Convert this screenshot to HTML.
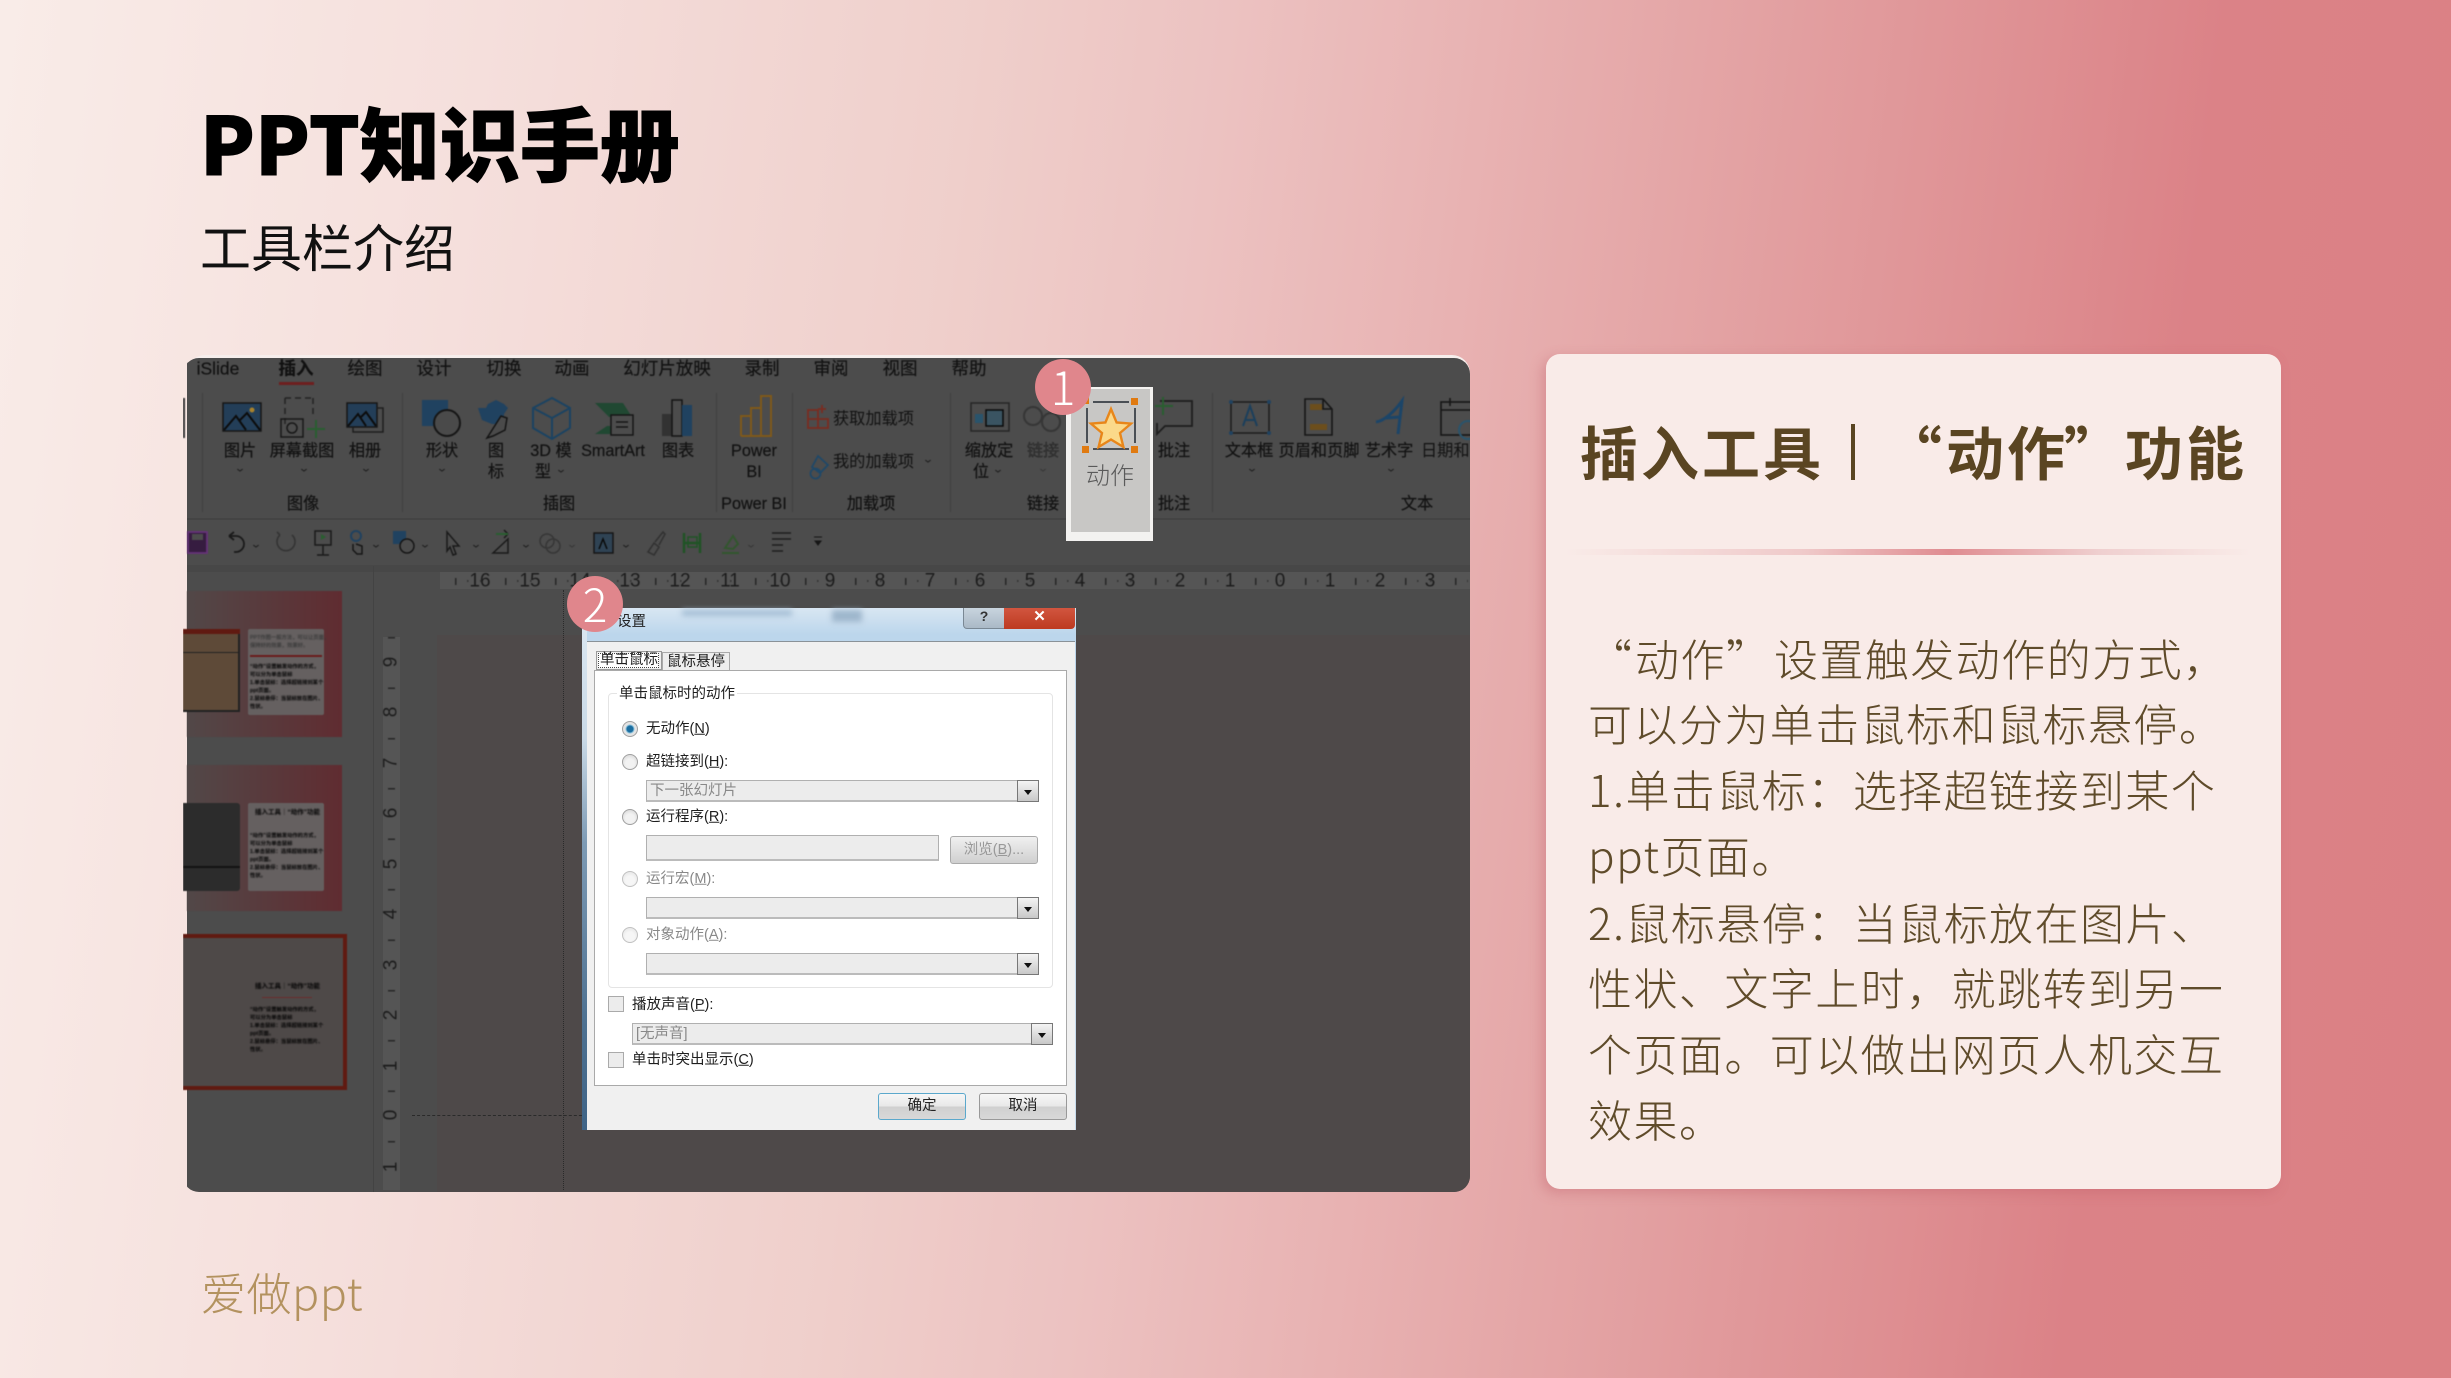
<!DOCTYPE html>
<html lang="zh"><head><meta charset="utf-8"><title>PPT知识手册</title>
<style>
html,body{margin:0;padding:0}
body{width:2451px;height:1378px;position:relative;overflow:hidden;background:linear-gradient(97deg,#f9ece8 0%,#f5dfdc 18.700%,#efcfcb 37.400%,#ecc2c1 47%,#e8b2b2 57%,#e3a2a3 67%,#de8f92 78%,#db8287 85%,#db8084 100%);font-family:"Liberation Sans","Noto Sans CJK SC",sans-serif}
div,span{position:absolute;white-space:nowrap;box-sizing:border-box}
svg{position:absolute;overflow:visible}
.c{transform:translate(-50%,-50%);color:#121212;font-size:16.200px;line-height:1;-webkit-text-stroke:.2px #121212}
.tab{font-size:17.500px}
.l{transform:translateY(-50%);line-height:1;font-size:14.500px;color:#1e1e1e}
.body{left:1588px;font-size:44px;letter-spacing:1.450px;font-weight:300;color:#5f4b2a;line-height:1;transform:translateY(-50%);font-family:"Noto Sans CJK SC",sans-serif}
.hd{top:450px;transform:translateY(-50%);font-size:58px;font-weight:700;color:#5a4522;line-height:1;letter-spacing:3px;font-family:'Noto Sans CJK SC',sans-serif}
.sel{background:#ececec;border:1px solid #b0b0b0;border-bottom:2px solid #bbb}
.dd{position:absolute;right:-1px;top:-1px;bottom:-2px;width:22px;background:linear-gradient(#f4f4f4,#c8c8c8);border:1px solid #777}
.dd:after{content:"";position:absolute;left:6px;top:9px;border:4px solid transparent;border-top:5px solid #111;border-bottom:0}
.rd{width:16px;height:16px;border-radius:50%;background:radial-gradient(circle at 50% 60%,#f2f2f2 40%,#cfcfcf 100%);border:1px solid #a0a0a0}
.cb{left:608px;width:16px;height:16px;background:#ececec;border:1px solid #aaa}
.ch{font-size:11px;color:#1c1c1c;transform:translate(-50%,-50%) scaleX(1.300);line-height:1}
.v{position:absolute;width:1px;background:#414141;top:393px;height:119px}
.rn{font-size:19px;color:#1c1c1c;transform:translate(-50%,-50%);line-height:1;top:581px}
.rv{font-size:19px;color:#1c1c1c;transform:translate(-50%,-50%) rotate(-90deg);line-height:1;left:391px}
.tt{font-size:5.300px;line-height:8px;color:#000;filter:blur(.5px);font-weight:700}
.tit{font-size:6.500px;line-height:8px;color:#000;filter:blur(.5px);font-weight:700}
</style></head><body>

<div style="left:200px;top:91px;font-size:80px;font-weight:900;color:#000;line-height:100px;font-family:'Noto Sans CJK SC',sans-serif;-webkit-text-stroke:1px #000;">PPT知识手册</div>
<div style="left:200px;top:209px;font-size:51px;color:#111;line-height:72px;font-family:'Noto Sans CJK SC',sans-serif;font-weight:400;">工具栏介绍</div>
<div style="left:201px;top:1291px;transform:translateY(-50%);font-size:45px;letter-spacing:.5px;line-height:1;color:#b3925f;font-weight:300;font-family:'Noto Sans CJK SC',sans-serif;">爱做ppt</div>

<!-- screenshot -->
<div style="left:187px;top:355px;width:1283px;height:40px;background:#f6eeec;border-radius:18px 18px 0 0"></div>
<div style="left:0;top:0;width:2451px;height:1378px;clip-path:inset(358px 981px 186px 183px round 16px);">
 <div style="left:187px;top:358px;width:1284px;height:835px;background:#4c4c4c"></div>
 <div style="left:187px;top:518px;width:1284px;height:2px;background:#444"></div>
 <div style="left:187px;top:565px;width:1284px;height:7px;background:#474747"></div>
 <div style="left:437px;top:635px;width:1034px;height:558px;background:#4e4949"></div>
 <div style="left:373px;top:566px;width:1px;height:627px;background:#434343"></div>
 <div style="left:440px;top:572px;width:1031px;height:17px;background:#555"></div>
 <div style="left:383px;top:637px;width:17px;height:553px;background:#555"></div>
 <div style="left:412px;top:1115px;width:180px;border-top:1px dashed #2a2a2a"></div>
 <div style="left:563px;top:590px;height:600px;border-left:1px dotted #2a2a2a"></div>

 <div style="left:0;top:0;width:2451px;height:1378px;filter:blur(.5px)">
  <!-- tabs -->
  <span class="c tab" style="left:218px;top:369px">iSlide</span>
  <span class="c tab" style="left:296px;top:369px;color:#111;font-weight:700">插入</span>
  <div style="left:279px;top:382px;width:35px;height:3px;background:#6e1f1f"></div>
  <span class="c tab" style="left:365px;top:369px">绘图</span>
  <span class="c tab" style="left:434px;top:369px">设计</span>
  <span class="c tab" style="left:504px;top:369px">切换</span>
  <span class="c tab" style="left:572px;top:369px">动画</span>
  <span class="c tab" style="left:667px;top:369px">幻灯片放映</span>
  <span class="c tab" style="left:762px;top:369px">录制</span>
  <span class="c tab" style="left:831px;top:369px">审阅</span>
  <span class="c tab" style="left:900px;top:369px">视图</span>
  <span class="c tab" style="left:969px;top:369px">帮助</span>
  <div style="left:183px;top:398px;width:2px;height:40px;background:#333"></div>

  <div class="v" style="left:202px"></div><div class="v" style="left:402px"></div><div class="v" style="left:716px"></div><div class="v" style="left:792px"></div><div class="v" style="left:950px"></div><div class="v" style="left:1212px"></div>

  <!-- ribbon icons -->
  <svg style="left:0;top:0" width="2451" height="1378" viewBox="0 0 2451 1378" fill="none">
   <rect x="223" y="403" width="38" height="28" fill="#233e58" stroke="#161616" stroke-width="1.500"/>
   <path d="M224 430l12-14 10 14M240 420l7-7 13 17" stroke="#0c0c0c" stroke-width="2"/><circle cx="252" cy="410" r="2.500" fill="#a8822d"/>
   <path d="M285 398h28M285 398v26M313 398v18" stroke="#222" stroke-width="1.500" stroke-dasharray="6 4"/>
   <rect x="281" y="419" width="22" height="18" stroke="#181818" stroke-width="1.500"/><circle cx="292" cy="428" r="5" stroke="#181818" stroke-width="1.500"/>
   <path d="M316 420v18M307 429h18" stroke="#2a5e30" stroke-width="2"/>
   <rect x="347" y="403" width="30" height="24" fill="#233e58" stroke="#161616" stroke-width="1.500"/>
   <path d="M377 408h6v24h-30v-5" stroke="#1e1e1e" stroke-width="1.500"/><path d="M348 426l10-12 8 12M360 418l6-6 10 14" stroke="#0c0c0c" stroke-width="2"/>
   <rect x="422" y="400" width="26" height="26" fill="#204260"/><circle cx="447" cy="423" r="13" fill="#4a4a4a" stroke="#161616" stroke-width="2"/>
   <path d="M478 408h8l2-4 8-4 8 4 4 4-4 6v10h-12l-10-4z" fill="#204260"/><path d="M487 438l14-22 6 2-2 12-12 6z" fill="#4a4a4a" stroke="#141414" stroke-width="1.500"/>
   <path d="M533 408l19-10 18 10v20l-18 11-19-11zM533 408l19 10 18-10M552 418v21" stroke="#1b4362" stroke-width="2"/>
   <path d="M595 403h28l9 14h-23l-14-14zM595 434h18l6-8h-12" fill="#204832"/><rect x="611" y="415" width="22" height="20" fill="#4c4c4c" stroke="#161616" stroke-width="1.500"/><path d="M616 422h12M616 427h12" stroke="#161616" stroke-width="1.500"/>
   <rect x="662" y="414" width="12" height="22" fill="#323232"/><rect x="672" y="400" width="10" height="36" fill="#4c4c4c" stroke="#141414" stroke-width="1.500"/><rect x="682" y="405" width="10" height="31" fill="#204260"/>
   <path d="M741 436v-20h10M751 436v-28h10M761 436v-40h10v40zM741 436h20" stroke="#80591a" stroke-width="2"/>
   <path d="M808 410h10v18h-10zM818 410v18M808 419h20v9h-10M822 405v8M818 409h8" stroke="#7a2c20" stroke-width="1.800"/>
   <path d="M818 456l10 9-8 8-8-6zM812 470a5 5 0 1 1-.1 .1" stroke="#1f4868" stroke-width="1.800"/>
   <rect x="971" y="403" width="38" height="28" stroke="#262626" stroke-width="1.500"/><rect x="975" y="414" width="8" height="9" fill="#2a546c"/><rect x="986" y="410" width="17" height="16" fill="#3a5462" stroke="#0a0a0a" stroke-width="1.500"/>
   <circle cx="1033" cy="416" r="9" stroke="#363636" stroke-width="2"/><circle cx="1051" cy="422" r="9" stroke="#363636" stroke-width="2"/>
   <path d="M1160 401h32v25h-27l-8 8v-11" stroke="#1e1e1e" stroke-width="1.800"/><path d="M1163 397v18M1155 406h18" stroke="#2a5e30" stroke-width="2"/>
   <rect x="1231" y="402" width="38" height="31" stroke="#1c1c1c" stroke-width="1.500"/><circle cx="1231" cy="402" r="2" fill="#204260"/><circle cx="1269" cy="402" r="2" fill="#204260"/><circle cx="1231" cy="433" r="2" fill="#204260"/><circle cx="1269" cy="433" r="2" fill="#204260"/>
   <path d="M1243 426l7-20 7 20M1246 420h8" stroke="#1b3f5c" stroke-width="2"/>
   <path d="M1305 399h18l9 10v26h-27z M1323 399v10h9" stroke="#161616" stroke-width="1.600"/><rect x="1310" y="404" width="12" height="6" fill="#6c4e1c"/><rect x="1310" y="424" width="17" height="6" fill="#6c4e1c"/>
   <path d="M1376 422c8-1 18-10 26-21l-4 33M1386 418l14-1" stroke="#1c4568" stroke-width="3"/>
   <rect x="1441" y="402" width="40" height="33" stroke="#161616" stroke-width="1.600"/><path d="M1441 410h40M1450 398v8" stroke="#161616" stroke-width="1.600"/><circle cx="1468" cy="430" r="9" stroke="#2a546c" stroke-width="2"/>
   <!-- QAT -->
   <rect x="188" y="532" width="19" height="21" fill="#361c40" stroke="#663278" stroke-width="1.800"/><rect x="192" y="534" width="11" height="6" fill="#4c4c4c"/>
   <path d="M229 536h7a8 8 0 0 1 0 16h-2M229 536l5-4M229 536l5 4" stroke="#1a1a1a" stroke-width="1.800"/>
   <path d="M292 535a9 9 0 1 1-12 0M280 535l-3-3" stroke="#343434" stroke-width="1.600"/>
   <path d="M315 531h16v14h-16zM323 545v10M317 555h12" stroke="#1a1a1a" stroke-width="1.500"/><path d="M321 534l5 3-5 3z" fill="#2a5e30"/>
   <circle cx="356" cy="536" r="5" stroke="#204260" stroke-width="2"/><path d="M353 544v6l4 4h5v-8l-6-2" stroke="#161616" stroke-width="1.500"/>
   <rect x="393" y="531" width="13" height="13" fill="#204260"/><circle cx="407" cy="546" r="7" fill="#4c4c4c" stroke="#161616" stroke-width="1.500"/>
   <path d="M447 532l12 14h-6l3 8-3 1-3-8-3 4z" stroke="#1a1a1a" stroke-width="1.500"/>
   <path d="M493 553l15-14v14zM508 534l-4-4M508 534l-4 4" stroke="#1a1a1a" stroke-width="1.500"/><path d="M496 534h12" stroke="#2a5e30" stroke-width="2"/>
   <circle cx="547" cy="541" r="7" stroke="#363636" stroke-width="1.500"/><circle cx="553" cy="546" r="7" stroke="#363636" stroke-width="1.500"/>
   <rect x="594" y="533" width="19" height="20" fill="#2f4354" stroke="#161616" stroke-width="1.500"/><path d="M599 549l4-10 4 10" stroke="#0a0a0a" stroke-width="1.500"/>
   <path d="M648 552l6-9 5 4-5 8zM655 542l8-10 2 2-6 11" stroke="#323232" stroke-width="1.600"/>
   <path d="M684 533v20M700 533v20M684 543h16" stroke="#205426" stroke-width="2.500"/><rect x="688" y="537" width="9" height="10" stroke="#205426" stroke-width="1.500"/>
   <path d="M725 548l8-12 5 8-5 5zM722 553h17" stroke="#32562e" stroke-width="2"/>
   <path d="M772 533h19M772 539h19M772 545h11M772 551h11" stroke="#1e1e1e" stroke-width="1.500"/>
   <path d="M814 537h8M815 541l3 4 3-4z" fill="#161616" stroke="#161616" stroke-width="1"/>
  </svg>
  <span class="ch" style="left:256px;top:545px">⌄</span><span class="ch" style="left:376px;top:545px">⌄</span><span class="ch" style="left:425px;top:545px">⌄</span><span class="ch" style="left:476px;top:545px">⌄</span><span class="ch" style="left:526px;top:545px">⌄</span><span class="ch" style="left:572px;top:545px;color:#363636">⌄</span><span class="ch" style="left:626px;top:545px">⌄</span><span class="ch" style="left:751px;top:545px;color:#363636">⌄</span>

  <span class="c" style="left:240px;top:451px">图片</span><span class="c" style="left:302px;top:451px">屏幕截图</span><span class="c" style="left:365px;top:451px">相册</span>
  <span class="ch" style="left:240px;top:469px">⌄</span><span class="ch" style="left:304px;top:469px">⌄</span><span class="ch" style="left:366px;top:469px">⌄</span>
  <span class="c" style="left:442px;top:451px">形状</span><span class="ch" style="left:442px;top:469px">⌄</span>
  <span class="c" style="left:496px;top:451px">图</span><span class="c" style="left:496px;top:472px">标</span>
  <span class="c" style="left:551px;top:451px">3D 模</span><span class="c" style="left:543px;top:472px">型</span><span class="ch" style="left:561px;top:470px">⌄</span>
  <span class="c" style="left:613px;top:451px">SmartArt</span><span class="c" style="left:678px;top:451px">图表</span>
  <span class="c" style="left:754px;top:451px">Power</span><span class="c" style="left:754px;top:472px">BI</span>
  <span class="l" style="left:833px;top:419px;font-size:16.200px;color:#121212">获取加载项</span><span class="l" style="left:833px;top:462px;font-size:16.200px;color:#121212">我的加载项</span><span class="ch" style="left:928px;top:460px">⌄</span>
  <span class="c" style="left:989px;top:451px">缩放定</span><span class="c" style="left:981px;top:472px">位</span><span class="ch" style="left:998px;top:470px">⌄</span>
  <span class="c" style="left:1043px;top:451px;color:#363636">链接</span><span class="ch" style="left:1043px;top:469px;color:#363636">⌄</span>
  <span class="c" style="left:1174px;top:451px">批注</span>
  <span class="c" style="left:1249px;top:451px">文本框</span><span class="ch" style="left:1252px;top:469px">⌄</span>
  <span class="c" style="left:1319px;top:451px">页眉和页脚</span>
  <span class="c" style="left:1389px;top:451px">艺术字</span><span class="ch" style="left:1391px;top:469px">⌄</span>
  <span class="l" style="left:1421px;top:451px;font-size:16.200px;color:#121212">日期和</span>

  <span class="c" style="left:303px;top:504px">图像</span><span class="c" style="left:559px;top:504px">插图</span><span class="c" style="left:754px;top:504px">Power BI</span><span class="c" style="left:871px;top:504px">加载项</span><span class="c" style="left:1043px;top:504px">链接</span><span class="c" style="left:1174px;top:504px">批注</span><span class="c" style="left:1417px;top:504px">文本</span>

  <!-- horizontal ruler -->
  <span class="rn" style="left:480px">16</span><span class="rn" style="left:530px">15</span><span class="rn" style="left:580px">14</span><span class="rn" style="left:630px">13</span><span class="rn" style="left:680px">12</span><span class="rn" style="left:730px">11</span><span class="rn" style="left:780px">10</span><span class="rn" style="left:830px">9</span><span class="rn" style="left:880px">8</span><span class="rn" style="left:930px">7</span><span class="rn" style="left:980px">6</span><span class="rn" style="left:1030px">5</span><span class="rn" style="left:1080px">4</span><span class="rn" style="left:1130px">3</span><span class="rn" style="left:1180px">2</span><span class="rn" style="left:1230px">1</span><span class="rn" style="left:1280px">0</span><span class="rn" style="left:1330px">1</span><span class="rn" style="left:1380px">2</span><span class="rn" style="left:1430px">3</span>
  <div style="left:445px;top:578px;width:1023px;height:7px;background:repeating-linear-gradient(90deg,transparent 0 10px,#262626 10px 11.500px,transparent 11.500px 50px)"></div>
  <div style="left:445px;top:580px;width:1023px;height:2px;background:repeating-linear-gradient(90deg,transparent 0 22px,#2e2e2e 22px 23.500px,transparent 23.500px 35px,#2e2e2e 35px 36.500px,transparent 36.500px 50px);opacity:.8"></div>
  <!-- vertical ruler -->
  <span class="rv" style="top:662px">9</span><span class="rv" style="top:712px">8</span><span class="rv" style="top:763px">7</span><span class="rv" style="top:813px">6</span><span class="rv" style="top:864px">5</span><span class="rv" style="top:914px">4</span><span class="rv" style="top:965px">3</span><span class="rv" style="top:1015px">2</span><span class="rv" style="top:1066px">1</span><span class="rv" style="top:1115px">0</span><span class="rv" style="top:1167px">1</span>
  <div style="left:388px;top:637px;width:7px;height:553px;background:repeating-linear-gradient(180deg,#262626 0 1.500px,transparent 1.500px 50.400px)"></div>

  <!-- thumbnails -->
  <div style="left:187px;top:591px;width:155px;height:146px;background:linear-gradient(90deg,#524848,#602c31)"></div>
  <div style="left:183px;top:629px;width:57px;height:83px;background:#5e4a38;border:2px solid #222;border-left:0;border-radius:0 3px 0 0"></div>
  <div style="left:183px;top:629px;width:57px;height:5px;background:#601a11"></div>
  <div style="left:183px;top:652px;width:57px;height:1px;background:#222"></div>
  <div style="left:248px;top:629px;width:76px;height:86px;background:#656060;border-radius:2px"></div>
  <div style="left:250px;top:655px;width:72px;height:2px;background:#6a1c1c"></div>
  <div class="tt" style="left:250px;top:634px;color:#3a3a3a">PPT作图一般方法，可以让页面，<br>保持好的效果，效果好。</div>
  <div class="tt" style="left:250px;top:663px">“动作”设置触发动作的方式，<br>可以分为单击鼠标<br>1.单击鼠标：选择超链接到某个<br>ppt页面。<br>2.鼠标悬停：当鼠标放在图片、<br>性状。</div>

  <div style="left:187px;top:765px;width:155px;height:146px;background:linear-gradient(90deg,#524848,#602c31)"></div>
  <div style="left:183px;top:803px;width:57px;height:88px;background:#2c2c2c;border-radius:0 3px 3px 0"></div>
  <div style="left:183px;top:866px;width:57px;height:2px;background:#121212"></div>
  <div style="left:248px;top:803px;width:76px;height:88px;background:#656060;border-radius:2px"></div>
  <div class="tit" style="left:255px;top:809px">插入工具｜“动作”功能</div>
  <div class="tt" style="left:250px;top:832px">“动作”设置触发动作的方式，<br>可以分为单击鼠标<br>1.单击鼠标：选择超链接到某个<br>ppt页面。<br>2.鼠标悬停：当鼠标放在图片、<br>性状。</div>

  <div style="left:183px;top:934px;width:164px;height:156px;background:#4e4948;border:4px solid #601a11;border-left:0"></div>
  <div class="tit" style="left:255px;top:983px">插入工具｜“动作”功能</div>
  <div style="left:262px;top:997px;width:50px;height:1px;background:#6a2c2c"></div>
  <div class="tt" style="left:250px;top:1006px">“动作”设置触发动作的方式，<br>可以分为单击鼠标<br>1.单击鼠标：选择超链接到某个<br>ppt页面。<br>2.鼠标悬停：当鼠标放在图片、<br>性状。</div>
 </div>
</div>

<!-- highlight -->
<div style="left:1066px;top:387px;width:87px;height:154px;background:#c8c7c5;border-style:solid;border-color:#f3f2f0;border-width:2px 3px 9px 5px"></div>
<svg style="left:0;top:0" width="2451" height="1378" viewBox="0 0 2451 1378" fill="none">
 <path d="M1087 402h48v47h-48z" stroke="#4a4f55" stroke-width="2"/>
 <g fill="#e07a10"><rect x="1081" y="396" width="12" height="12" fill="#c8c7c5"/><rect x="1129" y="396" width="12" height="12" fill="#c8c7c5"/><rect x="1081" y="443" width="12" height="12" fill="#c8c7c5"/><rect x="1129" y="443" width="12" height="12" fill="#c8c7c5"/>
 <rect x="1082" y="397" width="7" height="7"/><rect x="1131" y="398" width="7" height="7"/><rect x="1082" y="446" width="7" height="7"/><rect x="1131" y="446" width="7" height="7"/></g>
 <path d="M1111 409l5.600 13.500 14.400 1.100-11 9.400 3.400 14-12.400-7.500-12.400 7.500 3.400-14-11-9.400 14.400-1.100z" fill="#fbd98a" stroke="#e8861a" stroke-width="2.400"/>
</svg>
<span class="c" style="left:1110px;top:474px;font-size:24px;color:#5a5a5a;-webkit-text-stroke:0;font-family:'Noto Sans CJK SC',sans-serif;font-weight:300">动作</span>

<!-- dialog -->
<div style="left:582px;top:608px;width:494px;height:522px;filter:blur(.3px);background:linear-gradient(#d8e6f2 0,#bcd6ec 5%,#c8dcee 100%)">
 <div style="left:0;top:0;width:5px;height:522px;background:linear-gradient(#dce8f2 0,#c9d9e6 25%,#7d9ab4 45%,#4d7090 80%,#3f6487 100%)"></div>
 <div style="left:5px;top:33px;right:1px;bottom:0;background:#f0f0f0;border-top:1px solid #8a9298"></div>
 <div style="left:100px;top:2px;width:110px;height:6px;background:#a3bdd4;filter:blur(3px)"></div>
 <div style="left:250px;top:2px;width:30px;height:12px;background:#9eb6cc;filter:blur(3px)"></div>
 <span class="l" style="left:35px;top:14px;font-size:14.500px;color:#222">设置</span>
 <div style="left:381px;top:0;width:42px;height:21px;background:linear-gradient(#c8d4de,#aab9c6);border:1px solid #7a8894;border-top:0;border-radius:0 0 0 4px;text-align:center;color:#333;font-size:14px;line-height:17px;font-weight:700">?</div>
 <div style="left:422px;top:0;width:71px;height:21px;background:linear-gradient(#d1553f,#bd3a20);border-radius:0 0 4px 0;color:#fff;text-align:center;font-size:15px;line-height:17px;font-weight:700">✕</div>
</div>
<div style="left:0;top:0;width:2451px;height:1378px;filter:blur(.3px)">
 <div style="left:662px;top:652px;width:68px;height:19px;background:#eee;border:1px solid #aaa;border-bottom:0"></div>
 <span class="l" style="left:667px;top:662px">鼠标悬停</span>
 <div style="left:594px;top:670px;width:473px;height:416px;background:#fff;border:1.500px solid #a9a9a9"></div>
 <div style="left:596px;top:651px;width:66px;height:19px;background:#f0f0f0;border:1px solid #999"></div>
 <div style="left:598px;top:653px;width:61px;height:15px;background:#fff;border:1px dotted #444"></div>
 <span class="l" style="left:600px;top:660px">单击鼠标</span>
 <div style="left:608px;top:693px;width:445px;height:295px;border:1px solid #e4e4e4;border-radius:4px"></div>
 <span class="l" style="left:617px;top:694px;background:#fff;padding:0 2px;line-height:16px">单击鼠标时的动作</span>

 <div class="rd" style="left:622px;top:721px;background:radial-gradient(circle,#1c6ea0 0 3px,#8ac0da 4px,#e6e6e6 5px,#ddd 8px)"></div><span class="l" style="left:646px;top:729px">无动作(<u>N</u>)</span>
 <div class="rd" style="left:622px;top:754px"></div><span class="l" style="left:646px;top:762px">超链接到(<u>H</u>):</span>
 <div class="sel" style="left:646px;top:780px;width:393px;height:22px"><span class="l" style="left:3px;top:10px;color:#888">下一张幻灯片</span><div class="dd"></div></div>
 <div class="rd" style="left:622px;top:809px"></div><span class="l" style="left:646px;top:817px">运行程序(<u>R</u>):</span>
 <div class="sel" style="left:646px;top:835px;width:293px;height:26px"></div>
 <div style="left:950px;top:836px;width:88px;height:28px;background:linear-gradient(#f0f0f0,#cfcfcf);border:1px solid #aaa;border-radius:3px;color:#999;font-size:14.500px;text-align:center;line-height:26px">浏览(<u>B</u>)...</div>
 <div class="rd" style="left:622px;top:871px;opacity:.65"></div><span class="l" style="left:646px;top:879px;color:#888">运行宏(<u>M</u>):</span>
 <div class="sel" style="left:646px;top:897px;width:393px;height:22px"><div class="dd"></div></div>
 <div class="rd" style="left:622px;top:927px;opacity:.65"></div><span class="l" style="left:646px;top:935px;color:#888">对象动作(<u>A</u>):</span>
 <div class="sel" style="left:646px;top:953px;width:393px;height:22px"><div class="dd"></div></div>
 <div class="cb" style="top:996px"></div><span class="l" style="left:632px;top:1005px">播放声音(<u>P</u>):</span>
 <div class="sel" style="left:632px;top:1023px;width:421px;height:22px"><span class="l" style="left:3px;top:10px;color:#888">[无声音]</span><div class="dd"></div></div>
 <div class="cb" style="top:1052px"></div><span class="l" style="left:632px;top:1060px">单击时突出显示(<u>C</u>)</span>
 <div style="left:878px;top:1093px;width:88px;height:27px;background:linear-gradient(#f6f6f6 0,#e8e8e8 50%,#d0d0d0 51%,#d8d8d8);border:1.500px solid #5ba8cc;border-radius:3px;text-align:center;font-size:14.500px;line-height:24px;color:#222">确定</div>
 <div style="left:979px;top:1093px;width:88px;height:27px;background:linear-gradient(#f6f6f6 0,#e8e8e8 50%,#d0d0d0 51%,#d8d8d8);border:1px solid #999;border-radius:3px;text-align:center;font-size:14.500px;line-height:25px;color:#222">取消</div>
</div>

<div style="left:1035px;top:359px;width:56px;height:56px;border-radius:50%;background:#e0868c;color:#fff;font-size:46px;line-height:54px;text-align:center;font-weight:300;font-family:'Noto Sans CJK SC',sans-serif">1</div>
<div style="left:567px;top:576px;width:56px;height:56px;border-radius:50%;background:#e0868c;color:#fff;font-size:46px;line-height:54px;text-align:center;font-weight:300;font-family:'Noto Sans CJK SC',sans-serif">2</div>

<!-- card -->
<div style="left:1546px;top:354px;width:735px;height:835px;background:#f9ebe8;border-radius:14px;box-shadow:-4px 4px 12px rgba(190,90,100,.35)"></div>
<div class="hd" style="left:1580px">插入工具</div>
<div style="left:1851px;top:424px;width:4px;height:56px;background:#5a4522"></div>
<div class="hd" style="left:1884px">“</div>
<div class="hd" style="left:1946px">动作</div>
<div class="hd" style="left:2064px">”</div>
<div class="hd" style="left:2125px">功能</div>
<div style="left:1565px;top:549px;width:685px;height:6px;background:linear-gradient(90deg,rgba(223,139,144,0),#efc9c9 35%,#df8b90 56%,#efcfcf 78%,rgba(223,139,144,0))"></div>
<div class="body" style="top:657px">“</div>
<div class="body" style="top:657px;left:1635px">动作</div>
<div class="body" style="top:657px;left:1726px">”</div>
<div class="body" style="top:657px;left:1774px">设置触发动作的方式，</div>
<div class="body" style="top:722px">可以分为单击鼠标和鼠标悬停。</div>
<div class="body" style="top:788px">1.单击鼠标：选择超链接到某个</div>
<div class="body" style="top:854px">ppt页面。</div>
<div class="body" style="top:921px">2.鼠标悬停：当鼠标放在图片、</div>
<div class="body" style="top:986px">性状、文字上时，就跳转到另一</div>
<div class="body" style="top:1052px">个页面。可以做出网页人机交互</div>
<div class="body" style="top:1118px">效果。</div>
</body></html>
